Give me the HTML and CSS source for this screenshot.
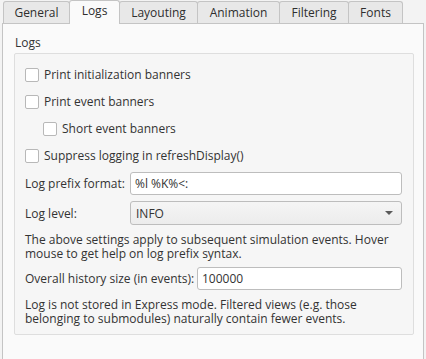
FILE: index.html
```html
<!DOCTYPE html>
<html lang="en">
<head>
    <meta charset="UTF-8">
    <meta name="viewport" content="width=device-width, initial-scale=1.0">
    <title>Preferences - Logs</title>
    <link rel="stylesheet" href="styles.css">
</head>
<body>
    <div class="tabbar">
        <div class="tab tab-general">General</div>
        <div class="tab tab-logs active">Logs</div>
        <div class="tab tab-layouting">Layouting</div>
        <div class="tab tab-animation">Animation</div>
        <div class="tab tab-filtering">Filtering</div>
        <div class="tab tab-fonts">Fonts</div>
    </div>

    <div class="pane">
        <div class="group-title">Logs</div>
        <div class="group">
            <div class="check-row">
                <span class="checkbox"></span>
                <span>Print initialization banners</span>
            </div>
            <div class="check-row">
                <span class="checkbox"></span>
                <span>Print event banners</span>
            </div>
            <div class="check-row indent">
                <span class="checkbox"></span>
                <span>Short event banners</span>
            </div>
            <div class="check-row">
                <span class="checkbox"></span>
                <span>Suppress logging in refreshDisplay()</span>
            </div>

            <div class="form-grid">
                <label for="prefix">Log prefix format:</label>
                <input type="text" id="prefix" class="field" value="%l %K%<:">
                <label>Log level:</label>
                <div class="combo">
                    <span>INFO</span>
                    <span class="arrow"></span>
                </div>
            </div>

            <p class="note">The above settings apply to subsequent simulation events. Hover mouse to get help on log prefix syntax.</p>

            <div class="history-row">
                <label for="history">Overall history size (in events):</label>
                <input type="text" id="history" class="field" value="100000">
            </div>

            <p class="note note-last">Log is not stored in Express mode. Filtered views (e.g. those belonging to submodules) naturally contain fewer events.</p>
        </div>
    </div>
</body>
</html>
```

FILE: styles.css
```css
/* preferences dialog, logs page */
body {
    margin: 0;
    background: #f3f3f3;
    font-family: "Open Sans", "DejaVu Sans", sans-serif;
    font-size: 12px;
    color: #333333;
    overflow: hidden;
}

.tabbar {
    display: flex;
    align-items: flex-end;
    height: 24px;
    padding-left: 3px;
}
.tab {
    box-sizing: border-box;
    height: 22px;
    margin-left: -1px;
    margin-bottom: 1px;
    border: 1px solid #c4c4c4;
    border-bottom: none;
    border-radius: 3px 3px 0 0;
    background: #e8e8e8;
    text-align: center;
    line-height: 21px;
    color: #2e2e2e;
}
.tab:first-child { margin-left: 0; }
.tab.active {
    position: relative;
    z-index: 1;
    height: 24px;
    margin-bottom: 0;
    background: #fafafa;
    line-height: 20px;
}
.tab-general { width: 67px; }
.tab-logs { width: 51px; }
.tab-layouting { width: 79px; }
.tab-animation { width: 83px; }
.tab-filtering { width: 70px; }
.tab-fonts { width: 55px; }

.pane {
    height: 340px;
    margin: -1px 2px 0 2px;
    border: 1px solid #c4c4c4;
    border-bottom: none;
    background: #fafafa;
}

.group-title {
    height: 16px;
    line-height: 16px;
    padding: 11px 0 0 12px;
    margin-bottom: 2px;
}

.group {
    box-sizing: border-box;
    width: 400px;
    height: 282px;
    margin-left: 11px;
    padding: 7px 11px 0 10px;
    border: 1px solid #dedede;
    border-radius: 2px;
    background: #f6f6f6;
}

.check-row {
    display: flex;
    align-items: center;
    height: 27px;
}
.check-row.indent { padding-left: 18px; }
.checkbox {
    box-sizing: border-box;
    width: 14px;
    height: 14px;
    margin-right: 5px;
    border: 1px solid #b8b8b8;
    border-radius: 2px;
    background: #ffffff;
}

.form-grid {
    display: grid;
    grid-template-columns: 105px 1fr;
    row-gap: 6px;
    align-items: center;
    margin-top: 3px;
}
.field {
    box-sizing: border-box;
    width: 100%;
    height: 23px;
    margin: 0;
    padding: 0 4px;
    border: 1px solid #bdbdbd;
    border-radius: 3px;
    background: #ffffff;
    font-family: inherit;
    font-size: 12px;
    color: #333333;
}
.combo {
    box-sizing: border-box;
    display: flex;
    align-items: center;
    justify-content: space-between;
    height: 24px;
    padding: 0 8px 0 5px;
    border: 1px solid #bdbdbd;
    border-radius: 3px;
    background: linear-gradient(#f5f5f5, #ececec);
}
.arrow {
    width: 0;
    height: 0;
    border-left: 4px solid transparent;
    border-right: 4px solid transparent;
    border-top: 4px solid #5a5a5a;
}

.note {
    margin: 8px 0 0 0;
    line-height: 14px;
}
.note-last { margin-top: 8px; }

.history-row {
    display: grid;
    grid-template-columns: 172px 1fr;
    align-items: center;
    margin-top: 6px;
}
```
